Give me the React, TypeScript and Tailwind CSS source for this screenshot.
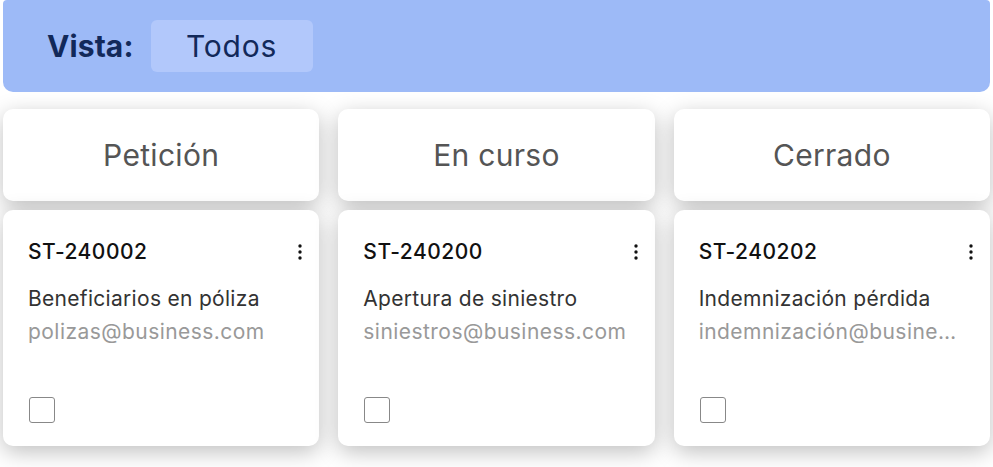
import React from 'react';

interface Ticket {
  id: string;
  title: string;
  email: string;
}

const columns: { name: string; ticket: Ticket }[] = [
  { name: 'Petición', ticket: { id: 'ST-240002', title: 'Beneficiarios en póliza', email: 'polizas@business.com' } },
  { name: 'En curso', ticket: { id: 'ST-240200', title: 'Apertura de siniestro', email: 'siniestros@business.com' } },
  { name: 'Cerrado', ticket: { id: 'ST-240202', title: 'Indemnización pérdida', email: 'indemnización@business.com' } },
];

const Kebab = () => (
  <svg width="6" height="18" viewBox="0 0 6 18" className="shrink-0">
    <circle cx="3" cy="3" r="1.7" fill="#111" />
    <circle cx="3" cy="9" r="1.7" fill="#111" />
    <circle cx="3" cy="15" r="1.7" fill="#111" />
  </svg>
);

const TicketCard: React.FC<{ ticket: Ticket }> = ({ ticket }) => (
  <div className="bg-white rounded-[10px] shadow-[0_6px_22px_rgba(0,0,0,0.25)] pl-[25px] pr-[16px] pt-[28px] pb-[23px] h-[236px] flex flex-col">
    <div className="flex items-center justify-between h-[28px]">
      <span className="text-[21px] font-medium text-[#111] tracking-[0.5px]">{ticket.id}</span>
      <Kebab />
    </div>
    <div className="mt-[16px] pr-[12px] leading-[33px] text-[21px]">
      <div className="text-[#333] truncate tracking-[0.3px]">{ticket.title}</div>
      <div className="text-[#999] truncate tracking-[0.45px]">{ticket.email}</div>
    </div>
    <div className="mt-auto ml-[1px] w-[26px] h-[26px] rounded-[3px] border-[1.5px] border-[#888] bg-white" />
  </div>
);

export default function App() {
  return (
    <div className="w-[993px] h-[467px] bg-white px-[3px] overflow-hidden" style={{ fontFamily: 'Inter, "Noto Sans", sans-serif' }}>
      <div className="h-[92px] bg-[#9dbaf7] rounded-b-[10px] rounded-t-[4px] flex items-center pl-[44px]">
        <span className="text-[30px] font-bold text-[#12295a] tracking-[0.1px]">Vista:</span>
        <div className="ml-[17px] w-[162px] h-[52px] rounded-[6px] bg-[#b2c8fb] flex items-center justify-center text-[30px] text-[#12295a] tracking-[0.8px]">
          Todos
        </div>
      </div>
      <div className="mt-[17px] grid grid-cols-3 gap-[19px]">
        {columns.map((col) => (
          <div key={col.name} className="flex flex-col gap-[9px]">
            <div className="h-[92px] bg-white rounded-[10px] shadow-[0_6px_22px_rgba(0,0,0,0.25)] flex items-center justify-center text-[30px] text-[#555] tracking-[0.3px]">
              {col.name}
            </div>
            <TicketCard ticket={col.ticket} />
          </div>
        ))}
      </div>
    </div>
  );
}
